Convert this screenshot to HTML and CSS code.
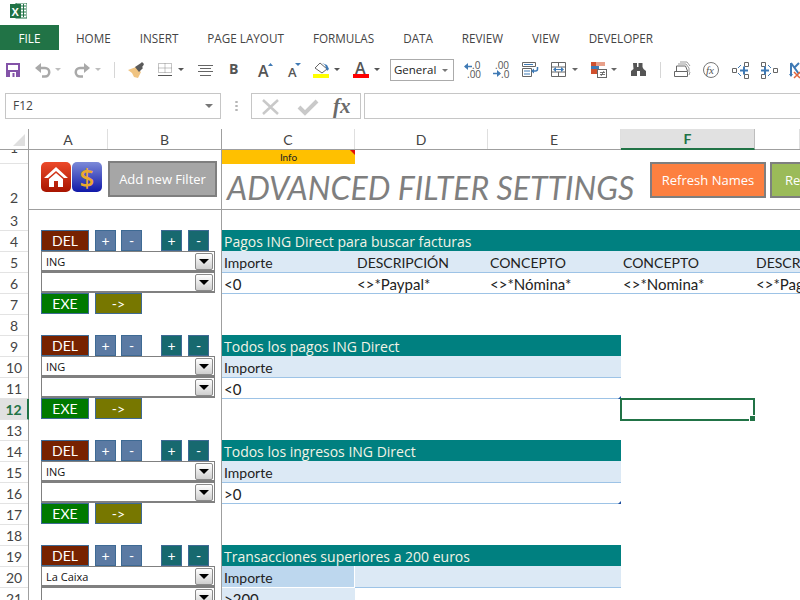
FILE: index.html
```html
<!DOCTYPE html>
<html lang="en">
<head>
    <meta charset="UTF-8">
    <meta name="viewport" content="width=device-width, initial-scale=1.0">
    <title>Advanced Filter Settings - Excel</title>
    <link rel="stylesheet" href="styles.css">
</head>
<body>
<div class="titlebar">
    <svg class="logo" width="17" height="16" viewBox="0 0 17 16">
        <rect x="6" y="0" width="11" height="15" fill="#fff" stroke="#217346"/>
        <path d="M11 3h5M11 6h5M11 9h5M11 12h5M13.500 1v13" stroke="#217346" fill="none"/>
        <rect x="0" y="1" width="11" height="14" fill="#217346"/>
        <text x="1.500" y="12.500" class="logo-x">X</text>
    </svg>
</div>
<nav class="tabs">
    <a class="tab tab-file">FILE</a>
    <a class="tab">HOME</a>
    <a class="tab">INSERT</a>
    <a class="tab">PAGE LAYOUT</a>
    <a class="tab">FORMULAS</a>
    <a class="tab">DATA</a>
    <a class="tab">REVIEW</a>
    <a class="tab">VIEW</a>
    <a class="tab">DEVELOPER</a>
</nav>
<div class="ribbon">
    <svg width="390" height="35" viewBox="0 55 390 35">
        <!-- save, undo, redo -->
        <rect x="6" y="63" width="14" height="14" fill="#8353a8"/>
        <rect x="8" y="65" width="10" height="5" fill="#fff"/>
        <rect x="10" y="72" width="6" height="5" fill="#fff"/>
        <rect x="12.500" y="73" width="2" height="4" fill="#8353a8"/>
        <path d="M38 68h7a4 4 0 0 1 0 8.500h-3" fill="none" stroke="#a9a9a9" stroke-width="2.500"/>
        <path d="M35 68l6-5v10z" fill="#a9a9a9"/>
        <path d="M55 68h6l-3 3z" fill="#bdbdbd"/>
        <path d="M87 68h-7a4 4 0 0 0 0 8.500h3" fill="none" stroke="#a9a9a9" stroke-width="2.500"/>
        <path d="M90 68l-6-5v10z" fill="#a9a9a9"/>
        <path d="M95 68h6l-3 3z" fill="#bdbdbd"/>
        <path d="M114.500 62v16" stroke="#d6d6d6"/>
        <!-- format painter, borders, align -->
        <path d="M128 70l8-3 5 5-3 6-4-1-2-4z" fill="#f0c482"/>
        <path d="M135 67l6-4 1-1 2 2-1 2-1 1 1 1-4 4z" fill="#5a5a5a"/>
        <path d="M158.500 63.500h13v9h-13zM165 63.500v9M158.500 68h13" fill="none" stroke="#8a8a8a" stroke-dasharray="1 1"/>
        <path d="M158 75.500h14" stroke="#555"/>
        <path d="M178 68h6l-3 3z" fill="#555"/>
        <path d="M198 65.500h15M200 68.500h11M198 71.500h15M200 75.500h11" stroke="#666"/>
        <!-- font buttons -->
        <text x="229" y="74" class="ic-b">B</text>
        <text x="258" y="77" class="ic-a">A</text>
        <path d="M268 66h5l-2.500-3z" fill="#3f7ab5"/>
        <text x="288" y="77" class="ic-a-s">A</text>
        <path d="M295 63h6l-3 3z" fill="#3f7ab5"/>
        <path d="M315 68l5-5 7 6-5 4z" fill="#fff" stroke="#666"/>
        <path d="M322 63l5 2 2 4-2 2-2-6z" fill="#3f7ab5"/>
        <rect x="313" y="74" width="16" height="4" fill="#ffff00"/>
        <path d="M334 68h6l-3 3z" fill="#555"/>
        <text x="355" y="74" class="ic-a">A</text>
        <rect x="353" y="74" width="16" height="4" fill="#ff0000"/>
        <path d="M374 68h6l-3 3z" fill="#555"/>
    </svg>
    <div class="format-select">General<span class="caret"></span></div>
    <svg width="346" height="35" viewBox="454 55 346 35">
        <!-- decimals -->
        <text x="472" y="69" class="ic-n">.0</text>
        <text x="467" y="78" class="ic-n">.00</text>
        <path d="M465 66.500h7" stroke="#3f7ab5" stroke-width="1.500"/>
        <path d="M464 66.500l4-3.500v7z" fill="#3f7ab5"/>
        <text x="495" y="69" class="ic-n">.00</text>
        <text x="501" y="78" class="ic-n">.0</text>
        <path d="M493 73.500h7" stroke="#3f7ab5" stroke-width="1.500"/>
        <path d="M501 73.500l-4-3.500v7z" fill="#3f7ab5"/>
        <!-- wrap, merge -->
        <path d="M522.500 62.500h13v4h-13zM522.500 68.500h9v8h-9z" fill="none" stroke="#666"/>
        <path d="M524 64.500h9M524 71h6M524 74h6" stroke="#3f7ab5"/>
        <path d="M537.500 67v2a2 2 0 0 1-2 2h-2" fill="none" stroke="#3f7ab5" stroke-width="1.500"/>
        <path d="M531 71l3-2.500v5z" fill="#3f7ab5"/>
        <path d="M551.500 62.500h14v14h-14zM551.500 67h14M551.500 72h14M558.500 62.500v4M558.500 72v4" fill="none" stroke="#666"/>
        <path d="M554 69.500h9" stroke="#3f7ab5"/>
        <path d="M553 69.500l3-2.500v5zM564 69.500l-3-2.500v5z" fill="#3f7ab5"/>
        <path d="M572 68h6l-3 3z" fill="#666"/>
        <!-- conditional format -->
        <rect x="591" y="62" width="5" height="4" fill="#d0502e"/>
        <rect x="596" y="62" width="9" height="4" fill="#e8a08a"/>
        <rect x="591" y="66" width="8" height="3" fill="#3f7ab5"/>
        <rect x="591" y="69" width="6" height="5" fill="#d0502e"/>
        <rect x="597.500" y="69.500" width="9" height="8" fill="#fff" stroke="#666"/>
        <path d="M600 72.500h5M600 74.500h5M604 71l-3 5" stroke="#555" fill="none" stroke-width=".8"/>
        <path d="M611 68h6l-3 3z" fill="#666"/>
        <!-- find -->
        <path d="M633 63h4v4h1.500v-4h4v4l1 2 2.500 2v5h-6v-5h-3v5h-6v-5l2.500-2z" fill="#555"/>
        <path d="M660.500 62v16" stroke="#d6d6d6"/>
        <!-- name manager, fx, trace -->
        <path d="M674.500 71.500h13v5h-13zM676.500 71v-5h9l2 5" fill="none" stroke="#666"/>
        <path d="M678 64h8l3 4v4M680 62h7l3 4M689 75l1-3" fill="none" stroke="#999"/>
        <circle cx="711" cy="70" r="7.500" fill="none" stroke="#777"/>
        <text x="706" y="74" class="ic-fx-s">fx</text>
        <path d="M732.500 68.500h4v4h-4zM744.500 62.500h4v4h-4zM744.500 74.500h4v4h-4z" fill="#fff" stroke="#666"/>
        <path d="M740 70.500h8M744 66.500v8" stroke="#3f7ab5" stroke-width="2"/>
        <path d="M738 68l3-3M738 73l3 3" stroke="#3f7ab5"/>
        <path d="M761.500 62.500h4v4h-4zM761.500 74.500h4v4h-4zM773.500 68.500h4v4h-4z" fill="#fff" stroke="#666"/>
        <path d="M761 70.500h8M765 66.500v8" stroke="#3f7ab5" stroke-width="2"/>
        <path d="M768 65l3 3M768 76l3-3" stroke="#3f7ab5"/>
        <path d="M791 63v13M791 63l8 11M799 63l-4 4" fill="none" stroke="#3f7ab5" stroke-width="2"/>
        <path d="M789 74l2 3 2-3z" fill="#3f7ab5"/>
        <path d="M794 78l6-6M794 72l6 6" stroke="#e2673d" stroke-width="1.500"/>
    </svg>
</div>
<div class="formula-bar">
    <div class="name-box">F12<span class="caret"></span></div>
    <div class="bar-dots"></div>
    <div class="fx-box">
        <svg width="109" height="25" viewBox="251 93 109 25">
            <path d="M262 99l15 14M277 99l-15 14" stroke="#c9c9c9" stroke-width="2.500"/>
            <path d="M298 106l6 6 12-12" fill="none" stroke="#c9c9c9" stroke-width="4"/>
            <text x="332" y="112" class="ic-fx">fx</text>
        </svg>
    </div>
    <div class="formula-input"></div>
</div>

<div class="col-heads">
    <div class="corner"><span class="corner-mark"></span></div>
    <div class="col col-a">A</div>
    <div class="col col-b">B</div>
    <div class="col col-c">C</div>
    <div class="col col-d">D</div>
    <div class="col col-d">E</div>
    <div class="col col-f">F</div>
    <div class="col col-g"></div>
</div>

<div class="sheet">
    <div class="row-heads">
        <div class="rh rh-1"><span>1</span></div>
        <div class="rh rh-2">2</div>
        <div class="rh">3</div>
        <div class="rh">4</div>
        <div class="rh">5</div>
        <div class="rh">6</div>
        <div class="rh">7</div>
        <div class="rh">8</div>
        <div class="rh">9</div>
        <div class="rh">10</div>
        <div class="rh">11</div>
        <div class="rh rh-sel">12</div>
        <div class="rh">13</div>
        <div class="rh">14</div>
        <div class="rh">15</div>
        <div class="rh">16</div>
        <div class="rh">17</div>
        <div class="rh">18</div>
        <div class="rh">19</div>
        <div class="rh">20</div>
        <div class="rh">21</div>
    </div>
    <div class="sheet-main">
        <div class="frozen">
            <div class="frozen-left">
                <svg class="pic" width="30" height="30" viewBox="0 0 30 30">
                    <defs>
                        <linearGradient id="redG" x1="0" y1="0" x2="0" y2="1">
                            <stop offset="0" stop-color="#ec4a2a"/>
                            <stop offset="1" stop-color="#a81400"/>
                        </linearGradient>
                    </defs>
                    <rect width="30" height="30" rx="5" fill="url(#redG)"/>
                    <path d="M15 5L3 16h4l8-7 8 7h4zM8 17l7-6 7 6v8h-5v-6h-4v6H8z" fill="#fff"/>
                </svg>
                <div class="pic pic-dollar">$</div>
                <button class="shape-btn btn-add">Add new Filter</button>
            </div>
            <div class="frozen-right">
                <div class="title-col">
                    <div class="info">Info</div>
                    <h1 class="page-title">ADVANCED FILTER SETTINGS</h1>
                </div>
                <button class="shape-btn btn-refresh">Refresh Names</button>
                <button class="shape-btn btn-next">Refresh</button>
            </div>
        </div>
        <div class="rows">
            <div class="panel">
                <section class="ctl">
                    <div class="ctl-row">
                        <button class="b b-del">DEL</button>
                        <button class="b b-pm b-blue">+</button>
                        <button class="b b-pm b-blue">-</button>
                        <button class="b b-pm b-teal b-push">+</button>
                        <button class="b b-pm b-teal">-</button>
                    </div>
                    <div class="combo">ING<span class="combo-btn"></span></div>
                    <div class="combo"><span class="combo-btn"></span></div>
                    <div class="ctl-row">
                        <button class="b b-exe">EXE</button>
                        <button class="b b-go">-&gt;</button>
                    </div>
                </section>
                <section class="ctl">
                    <div class="ctl-row">
                        <button class="b b-del">DEL</button>
                        <button class="b b-pm b-blue">+</button>
                        <button class="b b-pm b-blue">-</button>
                        <button class="b b-pm b-teal b-push">+</button>
                        <button class="b b-pm b-teal">-</button>
                    </div>
                    <div class="combo">ING<span class="combo-btn"></span></div>
                    <div class="combo"><span class="combo-btn"></span></div>
                    <div class="ctl-row">
                        <button class="b b-exe">EXE</button>
                        <button class="b b-go">-&gt;</button>
                    </div>
                </section>
                <section class="ctl">
                    <div class="ctl-row">
                        <button class="b b-del">DEL</button>
                        <button class="b b-pm b-blue">+</button>
                        <button class="b b-pm b-blue">-</button>
                        <button class="b b-pm b-teal b-push">+</button>
                        <button class="b b-pm b-teal">-</button>
                    </div>
                    <div class="combo">ING<span class="combo-btn"></span></div>
                    <div class="combo"><span class="combo-btn"></span></div>
                    <div class="ctl-row">
                        <button class="b b-exe">EXE</button>
                        <button class="b b-go">-&gt;</button>
                    </div>
                </section>
                <section class="ctl">
                    <div class="ctl-row">
                        <button class="b b-del">DEL</button>
                        <button class="b b-pm b-blue">+</button>
                        <button class="b b-pm b-blue">-</button>
                        <button class="b b-pm b-teal b-push">+</button>
                        <button class="b b-pm b-teal">-</button>
                    </div>
                    <div class="combo">La Caixa<span class="combo-btn"></span></div>
                    <div class="combo"><span class="combo-btn"></span></div>
                </section>
            </div>
            <div class="tables">
                <section class="ftable ftable-wide">
                    <div class="ftitle">Pagos ING Direct para buscar facturas</div>
                    <div class="fcols">
                        <div class="fhead">Importe</div>
                        <div class="fhead">DESCRIPCIÓN</div>
                        <div class="fhead">CONCEPTO</div>
                        <div class="fhead">CONCEPTO</div>
                        <div class="fhead">DESCRIPCIÓN</div>
                        <div class="fval">&lt;0</div>
                        <div class="fval">&lt;&gt;*Paypal*</div>
                        <div class="fval">&lt;&gt;*Nómina*</div>
                        <div class="fval">&lt;&gt;*Nomina*</div>
                        <div class="fval">&lt;&gt;*Pago*</div>
                    </div>
                </section>
                <section class="ftable">
                    <div class="ftitle">Todos los pagos ING Direct</div>
                    <div class="fcols">
                        <div class="fhead">Importe</div><div class="fhead"></div><div class="fhead"></div>
                        <div class="fval">&lt;0</div><div class="fval"></div><div class="fval"></div>
                    </div>
                    <span class="handle"></span>
                    <div class="cell-sel"></div>
                </section>
                <section class="ftable">
                    <div class="ftitle">Todos los ingresos ING Direct</div>
                    <div class="fcols">
                        <div class="fhead">Importe</div><div class="fhead"></div><div class="fhead"></div>
                        <div class="fval">&gt;0</div><div class="fval"></div><div class="fval"></div>
                    </div>
                    <span class="handle"></span>
                </section>
                <section class="ftable">
                    <div class="ftitle">Transacciones superiores a 200 euros</div>
                    <div class="fcols">
                        <div class="fhead fhead-dark">Importe</div><div class="fhead"></div><div class="fhead"></div>
                        <div class="fval fval-tint">&gt;200</div>
                    </div>
                </section>
            </div>
        </div>
    </div>
</div>
</body>
</html>
```

FILE: styles.css
```css
* {
    box-sizing: border-box;
}
html, body {
    margin: 0;
    height: 600px;
    overflow: hidden;
    background-color: #fff;
}
body {
    font-family: 'Lato', 'Liberation Sans', sans-serif;
    color: #222;
}
button {
    font-family: inherit;
    padding: 0;
    margin: 0;
}

/* window chrome */
.titlebar {
    height: 25px;
    padding: 3px 0 0 10px;
}
.logo {
    display: block;
}
.logo-x {
    font: bold 11px 'Liberation Sans', sans-serif;
    fill: #fff;
}
.tabs {
    display: flex;
    height: 25px;
    font-family: 'Open Sans', sans-serif;
    font-size: 11.7px;
    color: #444;
}
.tab {
    display: flex;
    align-items: center;
    justify-content: center;
    padding: 0 14.500px;
}
.tab-file {
    width: 59px;
    padding: 0;
    margin-right: 2.500px;
    background-color: #217346;
    color: #fff;
}
.ribbon {
    display: flex;
    height: 35px;
    margin-top: 5px;
}
.ribbon svg {
    display: block;
    flex: none;
}
.ribbon text {
    font-family: 'Open Sans', sans-serif;
    fill: #555;
}
.ic-b {
    font-size: 14px;
    font-weight: 700;
}
.ic-a {
    font-size: 16px;
    font-weight: 600;
}
.ic-a-s {
    font-size: 13px;
    font-weight: 600;
}
.ic-n {
    font-size: 10px;
}
.ribbon .ic-fx-s {
    font: italic 11px 'Liberation Serif', serif;
    fill: #555;
}
.format-select {
    position: relative;
    flex: none;
    width: 64px;
    height: 22px;
    margin-top: 4px;
    padding: 2px 0 0 3px;
    border: 1px solid #ababab;
    font-family: 'Open Sans', sans-serif;
    font-size: 11.500px;
    color: #222;
}
.caret {
    position: absolute;
    width: 0;
    height: 0;
    border-left: 3px solid transparent;
    border-right: 3px solid transparent;
    border-top: 3px solid #777;
}
.format-select .caret {
    right: 5px;
    top: 9px;
}

/* formula bar */
.formula-bar {
    display: flex;
    height: 26px;
    margin-top: 3px;
    padding-left: 5px;
}
.name-box {
    position: relative;
    width: 216px;
    padding: 3px 0 0 7px;
    border: 1px solid #c6c6c6;
    font-family: 'Open Sans', sans-serif;
    font-size: 12px;
    color: #444;
}
.name-box .caret {
    right: 7px;
    top: 10px;
    border-left-width: 4px;
    border-right-width: 4px;
    border-top-width: 4px;
}
.bar-dots {
    width: 30px;
    padding: 8px 0;
    background: radial-gradient(circle, #b5b5b5 1px, transparent 1.400px) center / 3px 4px repeat-y;
    background-clip: content-box;
}
.fx-box {
    width: 110px;
    border: 1px solid #c6c6c6;
}
.fx-box svg {
    display: block;
}
.ic-fx {
    font: italic bold 21px 'Liberation Serif', serif;
    fill: #6a6a6a;
}
.formula-input {
    flex: 1;
    margin-left: 3px;
    border: 1px solid #c6c6c6;
    border-right: 0;
}

/* column headers */
.col-heads {
    display: flex;
    height: 21px;
    margin-top: 10px;
    border-bottom: 1px solid #9f9f9f;
    font-size: 14px;
    color: #444;
}
.corner {
    position: relative;
    width: 29px;
    border-right: 1px solid #9f9f9f;
}
.corner-mark {
    position: absolute;
    right: 3px;
    bottom: 3px;
    width: 0;
    height: 0;
    border-left: 12px solid transparent;
    border-bottom: 12px solid #dfdfdf;
}
.col {
    display: flex;
    align-items: center;
    justify-content: center;
    border-right: 1px solid #dfdfdf;
}
.col-a {
    width: 79px;
}
.col-b {
    width: 114px;
    border-right: 1px solid #9f9f9f;
}
.col-c {
    width: 133px;
}
.col-d {
    width: 133px;
}
.col-f {
    width: 134px;
    height: 21px;
    background-color: #e1e1e1;
    border-right: 1px solid #bdbdbd;
    border-bottom: 2px solid #217346;
    color: #217346;
    font-weight: 700;
}
.col-g {
    flex: 1;
}

/* sheet */
.sheet {
    display: flex;
    height: 450px;
    overflow: hidden;
}
.row-heads {
    flex: none;
    width: 29px;
    border-right: 1px solid #9f9f9f;
    font-size: 14px;
    color: #444;
    text-align: center;
}
.rh {
    display: flex;
    align-items: center;
    justify-content: center;
    height: 21px;
    border-bottom: 1px solid #e3e3e3;
}
.rh-1 {
    height: 14px;
    overflow: hidden;
    align-items: flex-start;
}
.rh-1 span {
    margin-top: -11px;
}
.rh-2 {
    height: 46px;
    align-items: flex-end;
    padding-bottom: 4px;
    border-bottom: 0;
}
.rh-sel {
    background-color: #e1e1e1;
    color: #217346;
    font-weight: 700;
    margin-right: -1px;
    border-right: 2px solid #217346;
}
.sheet-main {
    flex: 1;
    min-width: 0;
}
.frozen {
    display: flex;
    height: 60px;
    border-bottom: 1px solid #9f9f9f;
}
.frozen-left {
    flex: none;
    display: flex;
    align-items: flex-start;
    width: 193px;
    padding: 12px 0 0 12px;
    border-right: 1px solid #9f9f9f;
}
.pic {
    display: block;
    flex: none;
    margin-right: 1px;
}
.pic-dollar {
    width: 30px;
    height: 30px;
    border-radius: 5px;
    background: linear-gradient(#7c8ad8, #1018a8);
    color: #eaa82c;
    font: 600 26px/30px 'Open Sans', sans-serif;
    text-align: center;
}
.shape-btn {
    flex: none;
    border: 2px solid #7f7f7f;
    color: #fff;
    font-family: 'Open Sans', sans-serif;
    font-size: 13px;
    white-space: nowrap;
}
.btn-add {
    width: 109px;
    height: 36px;
    margin: -1px 0 0 5px;
    background-color: #a6a6a6;
}
.frozen-right {
    display: flex;
    flex: 1;
    min-width: 0;
    overflow: hidden;
    align-items: flex-start;
}
.title-col {
    flex: none;
    width: 428px;
}
.info {
    position: relative;
    width: 133px;
    height: 14px;
    background-color: #ffc000;
    font-size: 10px;
    line-height: 14px;
    text-align: center;
}
.info::after {
    content: "";
    position: absolute;
    top: 0;
    right: 0;
    border-left: 5px solid transparent;
    border-top: 5px solid #e01010;
}
.page-title {
    margin: 8px 0 0;
    padding-left: 5px;
    font-family: 'Lato', sans-serif;
    font-size: 32px;
    font-style: italic;
    font-weight: 400;
    line-height: 32px;
    color: #7f7f7f;
    white-space: nowrap;
}
.btn-refresh {
    width: 116px;
    height: 36px;
    margin-top: 12px;
    background-color: #fd8040;
}
.btn-next {
    width: 120px;
    height: 36px;
    margin: 12px 0 0 4px;
    padding-left: 13px;
    background-color: #9bbb59;
    text-align: left;
}
.rows {
    display: flex;
    padding-top: 20px;
}

/* control column */
.panel {
    flex: none;
    width: 193px;
    height: 400px;
    padding-left: 12px;
    margin-top: -20px;
    padding-top: 20px;
    border-right: 1px solid #9f9f9f;
}
.ctl {
    height: 105px;
}
.ctl-row {
    display: flex;
    height: 21px;
}
.b {
    height: 21px;
    margin-right: 6px;
    border: 1px solid #3e6a94;
    color: #fff;
    font-size: 14px;
    line-height: 18px;
}
.b-del {
    width: 48px;
    background-color: #772200;
}
.b-pm {
    width: 21px;
    margin-right: 5px;
}
.b-blue {
    background-color: #5b7aa3;
}
.b-teal {
    background-color: #17696f;
}
.b-push {
    margin-left: 14px;
    margin-right: 6px;
}
.b-exe {
    width: 48px;
    background-color: #007a00;
}
.b-go {
    width: 47px;
    background-color: #777700;
}
.combo {
    position: relative;
    width: 174px;
    height: 21px;
    padding: 2px 0 0 4px;
    border: 1px solid #808080;
    border-bottom-width: 2px;
    background-color: #fff;
    font-family: 'Open Sans', sans-serif;
    font-size: 11px;
    line-height: 15px;
    color: #111;
}
.combo-btn {
    position: absolute;
    top: 1px;
    right: 1px;
    width: 18px;
    height: 17px;
    border: 1px solid #8a8a8a;
    border-radius: 2px;
    background: linear-gradient(#fff, #cfcfcf);
}
.combo-btn::after {
    content: "";
    position: absolute;
    left: 3px;
    top: 5px;
    border-left: 5px solid transparent;
    border-right: 5px solid transparent;
    border-top: 5px solid #000;
}

/* filter tables */
.tables {
    flex: 1;
    min-width: 0;
    overflow: hidden;
}
.ftable {
    position: relative;
    width: 399px;
    height: 105px;
    font-size: 15px;
}
.ftable-wide {
    width: 100%;
    overflow: hidden;
}
.ftitle {
    height: 21px;
    padding-left: 2px;
    background-color: #008080;
    color: #f3f3e6;
    font-family: 'Open Sans', sans-serif;
    font-size: 14px;
    line-height: 23px;
    white-space: nowrap;
}
.fcols {
    display: grid;
    grid-template-columns: repeat(5, 133px);
}
.ftable:not(.ftable-wide) .fcols {
    grid-template-columns: repeat(3, 133px);
}
.fhead, .fval {
    height: 21px;
    padding-left: 2px;
    line-height: 22px;
    white-space: nowrap;
}
.fhead {
    height: 22px;
    background-color: #dce9f5;
    border-bottom: 1px solid #9dc3e6;
    font-size: 14px;
    line-height: 24px;
}
.fhead-dark {
    background-color: #bdd7ee;
    border-right: 1px solid #fff;
    border-bottom-color: #fff;
}
.fval {
    border-bottom: 1px solid #9dc3e6;
}
.fval-tint {
    background-color: #dce9f5;
    border-bottom: 0;
}
.handle {
    position: absolute;
    left: 396px;
    top: 61px;
    border-left: 3px solid transparent;
    border-bottom: 3px solid #2050a0;
}
.cell-sel {
    position: absolute;
    left: 398px;
    top: 63px;
    width: 135px;
    height: 23px;
    border: 2px solid #217346;
}
.cell-sel::after {
    content: "";
    position: absolute;
    right: -3px;
    bottom: -3px;
    width: 5px;
    height: 5px;
    background-color: #217346;
    border: 1px solid #fff;
}
```
